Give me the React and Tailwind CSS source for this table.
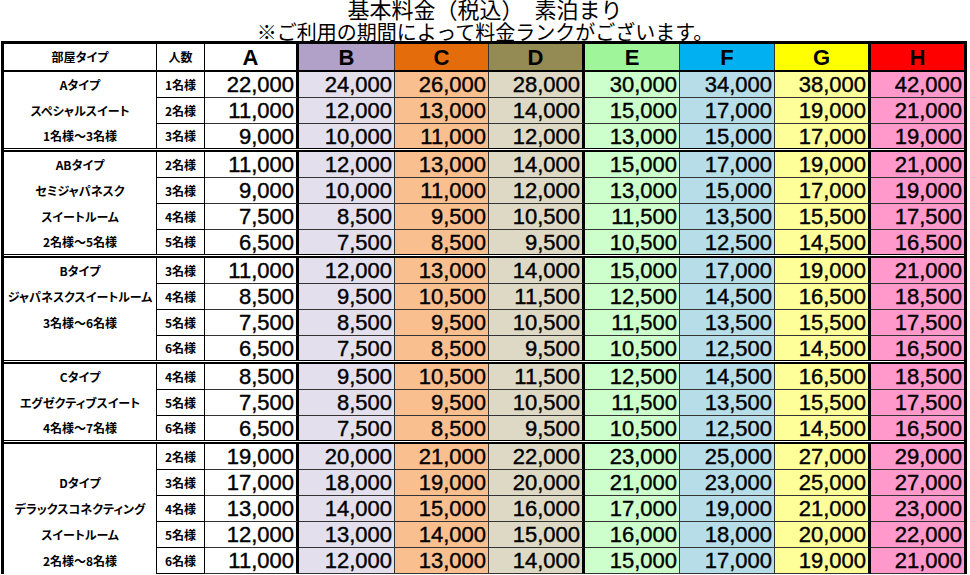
import React from 'react';

const cols = [
  { key: 'A', w: 'w-[94px]', head: 'bg-white', cell: 'bg-white', br: 'border-r-[3px] border-r-black' },
  { key: 'B', w: 'w-[96px]', head: 'bg-[#b1a0c7]', cell: 'bg-[#e4dfec]', br: 'border-r border-r-[#333]' },
  { key: 'C', w: 'w-[94px]', head: 'bg-[#e46c0a]', cell: 'bg-[#fabf8f]', br: 'border-r border-r-[#333]' },
  { key: 'D', w: 'w-[96px]', head: 'bg-[#948a54]', cell: 'bg-[#ddd9c4]', br: 'border-r-[3px] border-r-black' },
  { key: 'E', w: 'w-[95px]', head: 'bg-[#9ff59a]', cell: 'bg-[#ccffcc]', br: 'border-r border-r-[#333]' },
  { key: 'F', w: 'w-[95px]', head: 'bg-[#00b0f0]', cell: 'bg-[#b7dee8]', br: 'border-r border-r-[#333]' },
  { key: 'G', w: 'w-[96px]', head: 'bg-[#ffff00]', cell: 'bg-[#ffff99]', br: 'border-r-[3px] border-r-black' },
  { key: 'H', w: 'w-[93px]', head: 'bg-[#ff0000]', cell: 'bg-[#ff99cc]', br: '' },
];

const groups = [
  {
    labels: ['Aタイプ', 'スペシャルスイート', '1名様～3名様'],
    rows: [
      ['1名様', 22000, 24000, 26000, 28000, 30000, 34000, 38000, 42000],
      ['2名様', 11000, 12000, 13000, 14000, 15000, 17000, 19000, 21000],
      ['3名様', 9000, 10000, 11000, 12000, 13000, 15000, 17000, 19000],
    ],
  },
  {
    labels: ['ABタイプ', 'セミジャパネスク', 'スイートルーム', '2名様～5名様'],
    rows: [
      ['2名様', 11000, 12000, 13000, 14000, 15000, 17000, 19000, 21000],
      ['3名様', 9000, 10000, 11000, 12000, 13000, 15000, 17000, 19000],
      ['4名様', 7500, 8500, 9500, 10500, 11500, 13500, 15500, 17500],
      ['5名様', 6500, 7500, 8500, 9500, 10500, 12500, 14500, 16500],
    ],
  },
  {
    labels: ['Bタイプ', 'ジャパネスクスイートルーム', '3名様～6名様', ''],
    rows: [
      ['3名様', 11000, 12000, 13000, 14000, 15000, 17000, 19000, 21000],
      ['4名様', 8500, 9500, 10500, 11500, 12500, 14500, 16500, 18500],
      ['5名様', 7500, 8500, 9500, 10500, 11500, 13500, 15500, 17500],
      ['6名様', 6500, 7500, 8500, 9500, 10500, 12500, 14500, 16500],
    ],
  },
  {
    labels: ['Cタイプ', 'エグゼクティブスイート', '4名様～7名様'],
    rows: [
      ['4名様', 8500, 9500, 10500, 11500, 12500, 14500, 16500, 18500],
      ['5名様', 7500, 8500, 9500, 10500, 11500, 13500, 15500, 17500],
      ['6名様', 6500, 7500, 8500, 9500, 10500, 12500, 14500, 16500],
    ],
  },
  {
    labels: ['', 'Dタイプ', 'デラックスコネクティング', 'スイートルーム', '2名様～8名様'],
    rows: [
      ['2名様', 19000, 20000, 21000, 22000, 23000, 25000, 27000, 29000],
      ['3名様', 17000, 18000, 19000, 20000, 21000, 23000, 25000, 27000],
      ['4名様', 13000, 14000, 15000, 16000, 17000, 19000, 21000, 23000],
      ['5名様', 12000, 13000, 14000, 15000, 16000, 18000, 20000, 22000],
      ['6名様', 11000, 12000, 13000, 14000, 15000, 17000, 19000, 21000],
    ],
  },
];

const jp = "font-['Noto_Sans_CJK_JP',sans-serif] [font-feature-settings:'palt']";
const num = "font-['Liberation_Sans',Arial,sans-serif]";

const App = () => {
  return (
    <div className="w-[970px] h-[575px] overflow-hidden bg-white text-black">
      {/* title */}
      <div className="font-['Noto_Sans_CJK_JP',sans-serif] text-center h-[44px]">
        <div className="text-[22px] leading-[22px] -mt-[3px]">基本料金（税込）　素泊まり</div>
        <div className="text-[20px] leading-[24px] mt-[1px]">※ご利用の期間によって料金ランクがございます。</div>
      </div>

      <div className="ml-[1px] w-[966px] border-t-[3px] border-l-[3px] border-r-[3px] border-black">
        {/* header */}
        <div className="flex h-[28px] border-b-2 border-black">
          <div className={`${jp} w-[153px] border-r border-black flex items-center justify-center text-[12px] font-bold`}>部屋タイプ</div>
          <div className={`${jp} w-[48px] border-r border-black flex items-center justify-center text-[12px] font-bold`}>人数</div>
          {cols.map((c) => (
            <div key={c.key} className={`${c.w} ${c.head} ${c.br} ${num} flex items-center justify-center text-[22px] font-bold`}>
              {c.key}
            </div>
          ))}
        </div>

        {groups.map((g, gi) => (
          <div key={gi}>
            {g.rows.map((r, ri) => {
              const last = ri === g.rows.length - 1 && gi < groups.length - 1;
              return (
                <div key={ri} className={`flex ${last ? 'h-[24px]' : 'h-[26px]'}`}>
                  <div className={`${jp} w-[153px] border-r border-black flex items-center justify-center text-[12px] font-bold whitespace-nowrap`}>
                    {g.labels[ri]}
                  </div>
                  <div className={`${jp} w-[48px] border-r border-black ${last ? '' : 'border-b'} flex items-center justify-center text-[12px] font-bold`}>
                    {r[0]}
                  </div>
                  {cols.map((c, ci) => (
                    <div
                      key={c.key}
                      className={`${c.w} ${c.cell} ${c.br} ${last ? '' : 'border-b border-b-[#333]'} ${num} flex items-center justify-end pr-[2px] text-[22px] [-webkit-text-stroke:0.4px_black]`}
                    >
                      {r[ci + 1].toLocaleString('en-US')}
                    </div>
                  ))}
                </div>
              );
            })}
            {gi < groups.length - 1 && (
              <div className="h-[4px] border-t border-b-2 border-black bg-white" />
            )}
          </div>
        ))}
      </div>
    </div>
  );
};

export default App;
